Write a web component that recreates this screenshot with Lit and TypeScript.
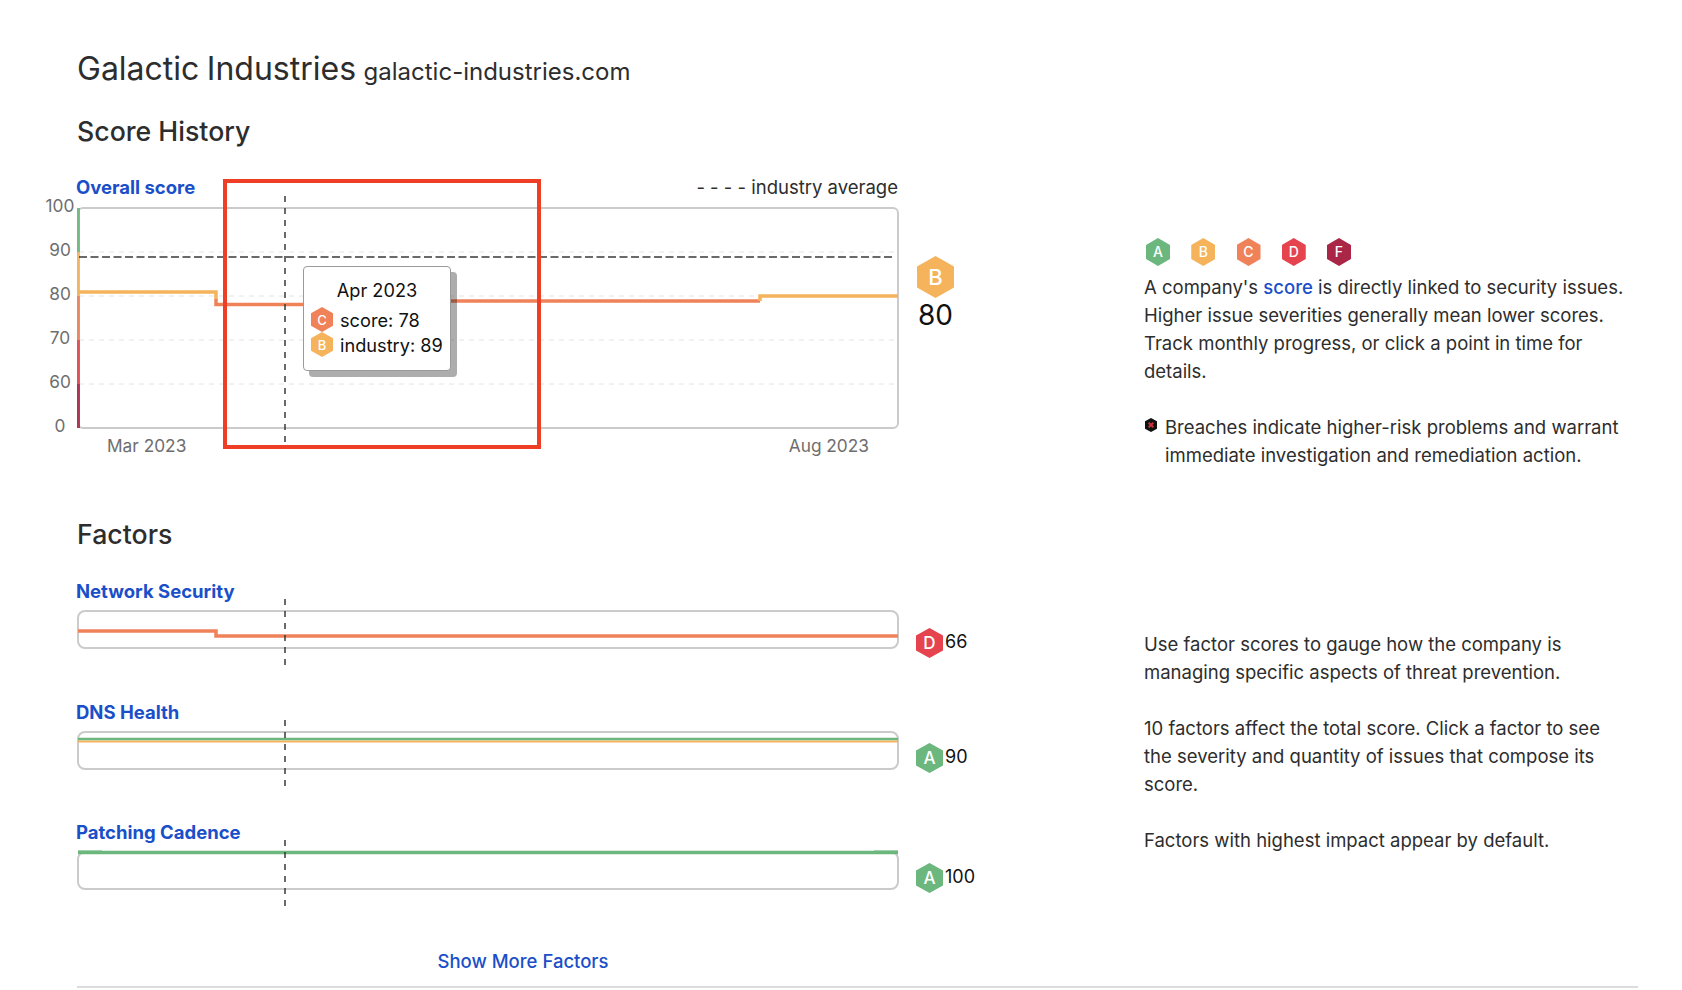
import { LitElement, html, css, svg, unsafeCSS } from "lit";
import { customElement, property } from "lit/decorators.js";

const COLORS = { A: "#6bb77d", B: "#f5b35b", C: "#f0825a", D: "#e5444f", F: "#a92646" };

@customElement("grade-hex")
class GradeHex extends LitElement {
  @property() grade: keyof typeof COLORS = "A";
  static styles = css`
    :host { display: inline-flex; flex: none; }
    .hex {
      width: 100%; height: 100%;
      display: flex; align-items: center; justify-content: center;
      clip-path: polygon(50% 0, 100% 25%, 100% 75%, 50% 100%, 0 75%, 0 25%);
      color: #fff; font-weight: 500;
    }
    .A { background: ${unsafeCSS(COLORS.A)}; }
    .B { background: ${unsafeCSS(COLORS.B)}; }
    .C { background: ${unsafeCSS(COLORS.C)}; }
    .D { background: ${unsafeCSS(COLORS.D)}; }
    .F { background: ${unsafeCSS(COLORS.F)}; }
  `;
  render() {
    return html`<div class="hex ${this.grade}">${this.grade}</div>`;
  }
}

const guide = (y1: number, y2: number) =>
  svg`<line x1="208" x2="208" y1=${y1} y2=${y2} stroke="#3a3a3a" stroke-width="1.5" stroke-dasharray="6 6"></line>`;

const line = (d: string, color: string, w = 3.5, opacity = 1) =>
  svg`<path d=${d} fill="none" stroke=${color} stroke-width=${w} opacity=${opacity}></path>`;

const factors = [
  {
    name: "Network Security", grade: "D", value: 66, side: 18,
    lines: svg`${line("M1 21H139V26H821", COLORS.C)}`,
    guideEnd: 57,
  },
  {
    name: "DNS Health", grade: "A", value: 90, side: 12,
    lines: svg`${line("M1 10.5H821", COLORS.B, 2)}${line("M1 8H821", COLORS.A, 2.5)}`,
    guideEnd: 56,
  },
  {
    name: "Patching Cadence", grade: "A", value: 100, side: 12,
    lines: svg`${line("M1 1.5H821", COLORS.A)}<rect x="1" y="-0.5" width="24" height="3" fill=${COLORS.A}></rect><rect x="797" y="-0.5" width="24" height="3" fill=${COLORS.A}></rect>`,
    guideEnd: 57,
  },
];

@customElement("app-root")
class AppRoot extends LitElement {
  static styles = css`
    :host {
      display: block; width: 1682px; height: 990px; overflow: hidden; background: #fff;
      font-family: Inter, "Noto Sans", sans-serif; font-size: 18.5px; line-height: 28px; color: #2d2d2d;
      box-sizing: border-box;
    }
    * { box-sizing: border-box; }
    a { color: #1a4fc9; text-decoration: none; }
    .page { padding: 47px 44px 0 45px; }
    .title { margin: 0 0 0 32px; height: 44px; line-height: 44px; font-size: 32px; font-weight: 400; white-space: nowrap; word-spacing: -1.5px; }
    .domain { font-size: 24px; word-spacing: 0; }
    h2 { margin: 0 0 0 32px; height: 32px; line-height: 32px; font-size: 26.7px; font-weight: 500; }
    .score-title { margin-top: 24px; }
    .section { display: grid; grid-template-columns: 1099px 1fr; }
    .history { margin-top: 26px; height: 345px; }
    .chart-head { display: flex; justify-content: space-between; margin-left: 31px; width: 822px; height: 28px; }
    .strong { font-weight: 700; }
    .medium { font-weight: 500; }
    .chart-row { display: flex; margin-top: 6px; }
    .axis { width: 32px; height: 222px; margin-top: -15px; color: #6e6e6e; text-align: center; font-size: 17.3px; transform: translateX(-1px); }
    .axis span { height: 44px; display: block; }
    .plot, .track { position: relative; width: 822px; border: 2px solid #cbcbcb; flex: none; }
    .plot { height: 222px; border-radius: 6px; }
    .track { height: 39px; border-radius: 8px; margin-left: 32px; }
    .overlay { position: absolute; left: -2px; top: -2px; overflow: visible; }
    .tooltip {
      position: absolute; left: 224px; top: 57px; width: 148px; height: 105px;
      background: #fff; border: 1.5px solid #9a9a9a; border-radius: 4px;
      box-shadow: 6px 6px 0 rgba(0, 0, 0, 0.32);
      color: #111; padding: 9px 0 0 7px; font-size: 18.2px;
    }
    .tip-date { text-align: center; padding-right: 7px; margin-bottom: 3px; }
    .tip-row { display: flex; align-items: center; gap: 7px; height: 25px; white-space: nowrap; }
    .tip-row grade-hex { width: 22px; height: 25px; font-size: 13px; }
    .callout { position: absolute; left: 144px; top: -30px; width: 318px; height: 270px; border: 4px solid #ee3f26; }
    .big { margin-left: 18px; margin-top: 49px; width: 37px; color: #111; }
    .big grade-hex { width: 37px; height: 42px; font-size: 22px; display: flex; }
    .big div.score { font-size: 28px; line-height: 34px; text-align: center; }
    .x-axis { display: flex; justify-content: space-between; margin: 3px 0 0 32px; padding: 0 30px; width: 822px; color: #6e6e6e; font-size: 17.3px; }
    .legend { display: flex; gap: 21.25px; margin-left: 2px; height: 28px; margin-bottom: 7px; }
    .legend grade-hex { width: 24px; height: 28px; font-size: 14px; }
    .notes { padding-top: 65px; }
    p { margin: 0; }
    .breach { display: flex; gap: 7px; margin-top: 28px; }
    .breach svg { flex: none; margin-top: 5px; }
    .factors { margin-top: 27px; }
    .factor { height: 121px; }
    .factor:nth-child(2) { height: 120px; }
    .factor-name { margin-left: 31px; height: 28px; }
    .factor-row { display: flex; margin-top: 5px; }
    .factor-side { display: flex; gap: 2px; margin-left: 17px; color: #111; height: 30px; line-height: 28px; font-size: 18px; }
    .factor-side grade-hex { width: 27px; height: 30px; font-size: 17px; }
    .factor-notes { padding-top: 53px; max-width: 470px; }
    .factor-notes p + p { margin-top: 28px; }
    .more { margin: 8px 0 0 32px; width: 892px; text-align: center; font-weight: 500; }
    .rule { margin: 11px 0 0 32px; width: 1561px; height: 2px; background: #dcdcdc; }
  `;

  render() {
    return html`
      <div class="page">
        <h1 class="title">Galactic Industries <span class="domain">galactic-industries.com</span></h1>
        <h2 class="score-title">Score History</h2>
        <section class="section history">
          <div>
            <div class="chart-head">
              <a class="strong" href="#">Overall score</a>
              <span>- - - - industry average</span>
            </div>
            <div class="chart-row">
              <div class="axis">${[100, 90, 80, 70, 60, 0].map((n) => html`<span>${n}</span>`)}</div>
              <div class="plot">
                <svg class="overlay" width="822" height="222">
                  ${[45, 89, 133, 177].map(
                    (y) => svg`<line x1="2" x2="820" y1=${y} y2=${y} stroke="#e4e4e4" stroke-width="1" stroke-dasharray="5 5"></line>`
                  )}
                  ${line("M1.5 1V45", COLORS.A, 3, 0.9)}${line("M1.5 45V89", COLORS.B, 3, 0.9)}${line("M1.5 89V133", COLORS.C, 3, 0.9)}
                  ${line("M1.5 133V177", COLORS.D, 3, 0.9)}${line("M1.5 177V221", COLORS.F, 3, 0.9)}
                  ${line("M139 92V97.5H370V94H683", COLORS.C)}
                  ${line("M683 94V89H821", COLORS.B)}
                  ${line("M1 85H139V92", COLORS.B)}
                  <line x1="2" x2="816" y1="50" y2="50" stroke="#3a3a3a" stroke-width="1.5" stroke-dasharray="8 3.5"></line>
                  ${guide(-11, 239)}
                </svg>
                <div class="tooltip">
                  <div class="tip-date">Apr 2023</div>
                  <div class="tip-row"><grade-hex grade="C"></grade-hex><span>score: 78</span></div>
                  <div class="tip-row"><grade-hex grade="B"></grade-hex><span>industry: 89</span></div>
                </div>
                <div class="callout"></div>
              </div>
              <div class="big">
                <grade-hex grade="B"></grade-hex>
                <div class="score">80</div>
              </div>
            </div>
            <div class="x-axis"><span>Mar 2023</span><span>Aug 2023</span></div>
          </div>
          <div class="notes">
            <div class="legend">
              ${["A", "B", "C", "D", "F"].map((g) => html`<grade-hex grade=${g}></grade-hex>`)}
            </div>
            <p>A company's <a class="medium" href="#">score</a> is directly linked to security issues. Higher issue severities generally mean lower scores. Track monthly progress, or click a point in time for details.</p>
            <div class="breach">
              <svg width="14" height="14" viewBox="0 0 14 14">
                <path d="M7 0 13 3.2V10.8L7 14 1 10.8V3.2Z" fill="#111"></path>
                <path d="M4.7 4.7 9.3 9.3M9.3 4.7 4.7 9.3" stroke="#c9343c" stroke-width="2"></path>
              </svg>
              <p>Breaches indicate higher-risk problems and warrant immediate investigation and remediation action.</p>
            </div>
          </div>
        </section>
        <h2>Factors</h2>
        <section class="section factors">
          <div>
            ${factors.map(
              (f) => html`
                <div class="factor">
                  <div class="factor-name"><a class="strong" href="#">${f.name}</a></div>
                  <div class="factor-row">
                    <div class="track">
                      <svg class="overlay" width="822" height="39">${f.lines}${guide(-11, f.guideEnd)}</svg>
                    </div>
                    <div class="factor-side" style="margin-top:${f.side}px">
                      <grade-hex grade=${f.grade}></grade-hex><span>${f.value}</span>
                    </div>
                  </div>
                </div>
              `
            )}
          </div>
          <div class="factor-notes">
            <p>Use factor scores to gauge how the company is managing specific aspects of threat prevention.</p>
            <p>10 factors affect the total score. Click a factor to see the severity and quantity of issues that compose its score.</p>
            <p>Factors with highest impact appear by default.</p>
          </div>
        </section>
        <div class="more"><a href="#">Show More Factors</a></div>
        <div class="rule"></div>
      </div>
    `;
  }
}
